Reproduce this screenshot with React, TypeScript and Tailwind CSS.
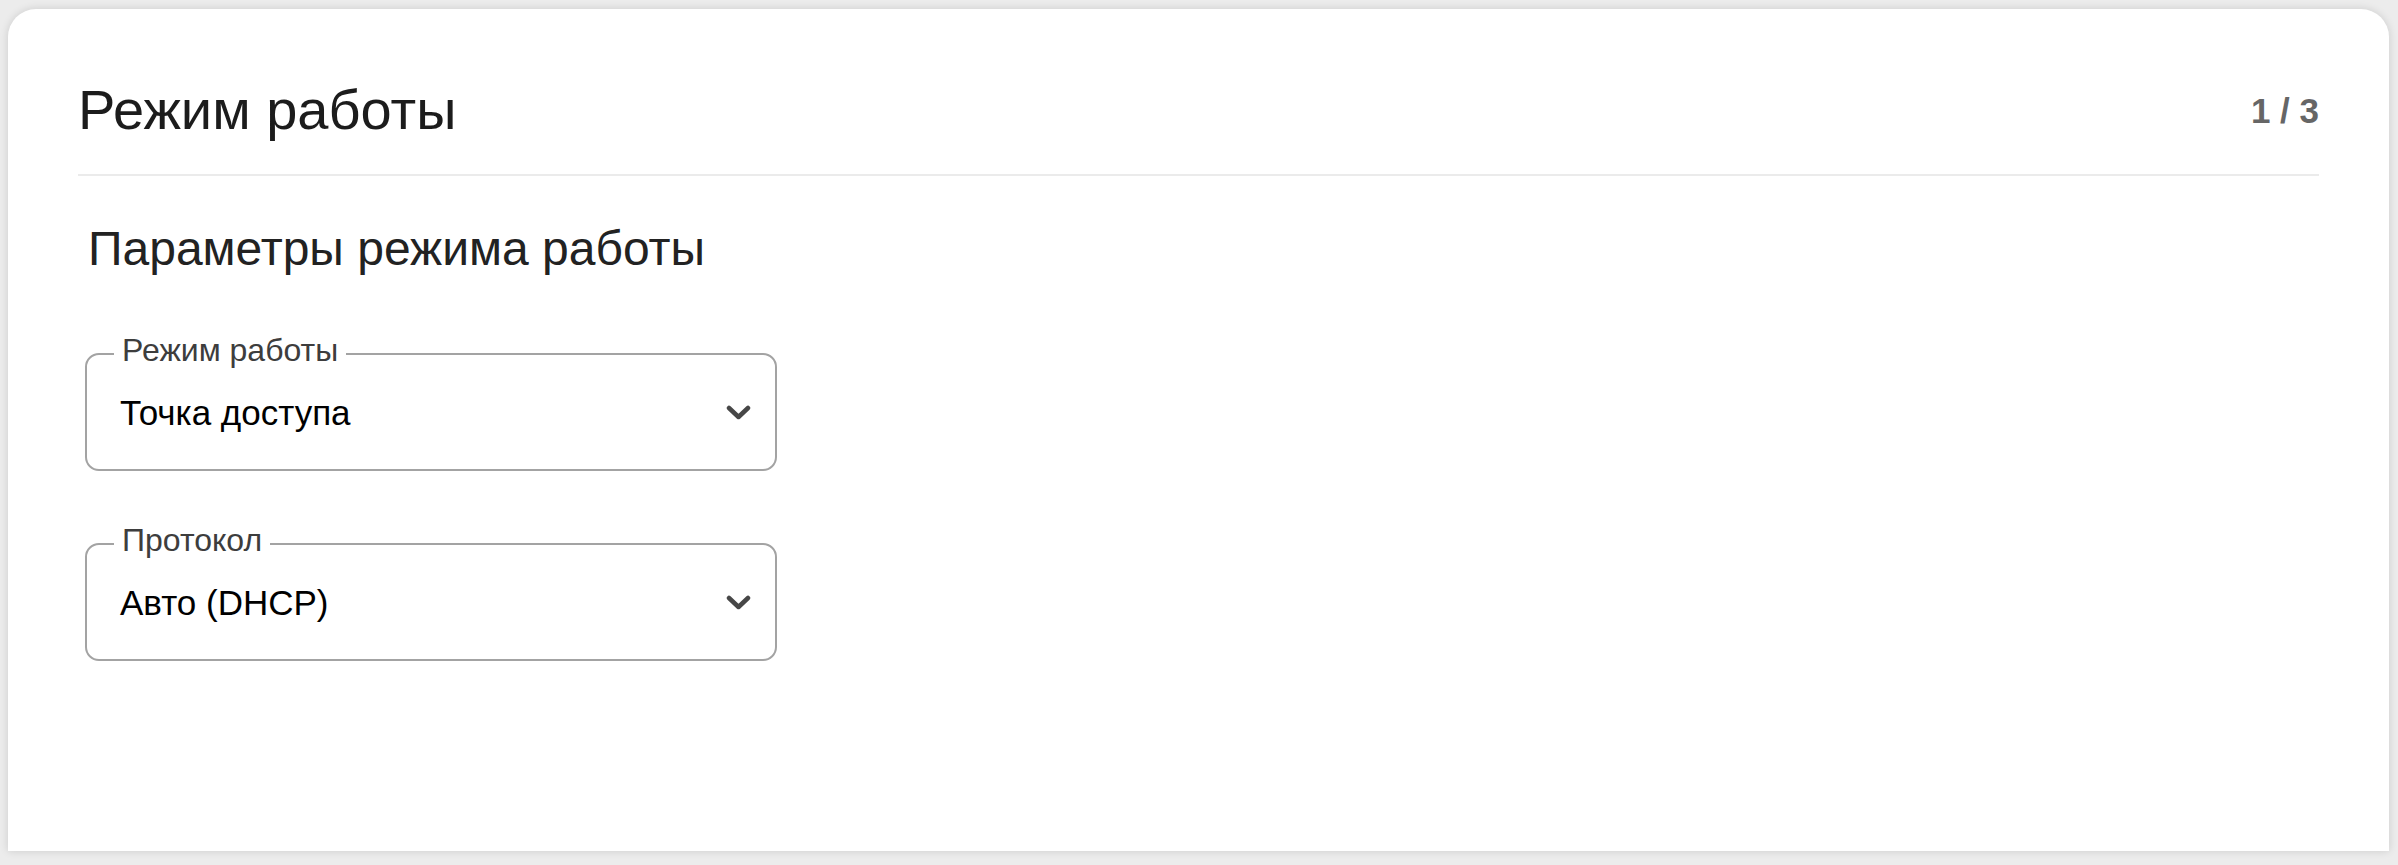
import React from 'react';

const ChevronDown = () => (
  <svg width="25" height="15" viewBox="0 0 25 15" fill="none">
    <path d="M3 3 L12.5 12 L22 3" stroke="#474747" strokeWidth="4.5" strokeLinecap="round" strokeLinejoin="round" />
  </svg>
);

type SelectProps = { label: string; value: string };

const OutlinedSelect = ({ label, value }: SelectProps) => (
  <div className="relative w-[692px] h-[118px] rounded-[14px] border-2 border-[#a3a3a3] flex items-center justify-between pl-[33px] pr-[24px] cursor-pointer">
    {/* Label sits on the top border */}
    <span className="absolute -top-[21px] left-[27px] bg-white px-[8px] text-[32px] leading-none text-[#3d3d3d]">
      {label}
    </span>
    <span className="text-[35px] leading-none text-black">{value}</span>
    <ChevronDown />
  </div>
);

const App = () => {
  return (
    <div className="h-screen bg-[#ececec] flex flex-col pt-[9px] pl-[8px] pr-[9px] pb-[14px] font-['Liberation_Sans',Arial,sans-serif]">
      <div className="flex-1 bg-white rounded-t-[28px] shadow-[0_0_8px_rgba(0,0,0,0.14)] px-[70px] pt-[71px]">
        <div className="flex items-center justify-between border-b-2 border-[#ebebeb] pb-[34px]">
          <h1 className="text-[56px] leading-[60px] text-[#1c1c1c]">Режим работы</h1>
          <span className="text-[35px] leading-none font-bold text-[#666666]">1 / 3</span>
        </div>

        <div className="pl-[7px]">
          <h2 className="mt-[47px] pl-[3px] text-[48px] leading-[52px] text-[#222222]">Параметры режима работы</h2>

          <div className="mt-[78px] flex flex-col gap-[72px]">
            <OutlinedSelect label="Режим работы" value="Точка доступа" />
            <OutlinedSelect label="Протокол" value="Авто (DHCP)" />
          </div>
        </div>
      </div>
    </div>
  );
};

export default App;
